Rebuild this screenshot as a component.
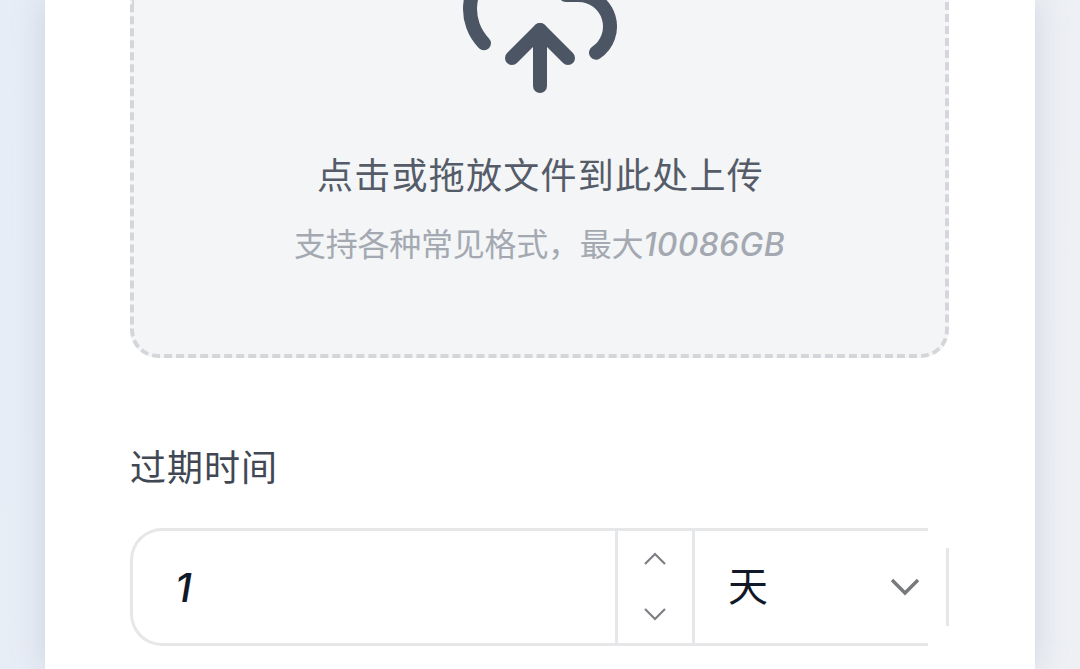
<div class="page">
  <main class="card">
    <section class="drop">
      <svg class="cloud" viewBox="0 0 24 24" fill="none" stroke="currentColor" stroke-width="2" stroke-linecap="round" stroke-linejoin="round" aria-hidden="true">
        <path d="M12 13v8" />
        <path d="M4 14.899A7 7 0 1 1 15.71 8h1.79a4.5 4.5 0 0 1 2.5 8.242" />
        <path d="m8 17 4-4 4 4" />
      </svg>
      <p class="primary">点击或拖放文件到此处上传</p>
      <p class="secondary">支持各种常见格式，最大<i>10086GB</i></p>
    </section>

    <label class="label" for="expiry">过期时间</label>
    <div class="group">
      <input id="expiry" class="number" value="1" />
      <div class="stepper">
        <button aria-label="增加">
          <svg viewBox="0 0 24 14" fill="none" stroke="currentColor" stroke-width="2.2"><path d="M2 12 12 2l10 10" /></svg>
        </button>
        <button aria-label="减少">
          <svg viewBox="0 0 24 14" fill="none" stroke="currentColor" stroke-width="2.2"><path d="M2 2l10 10L22 2" /></svg>
        </button>
      </div>
      <div class="select">
        <span>天</span>
        <svg viewBox="0 0 30 18" fill="none" stroke="currentColor" stroke-width="3.4"><path d="M2 2l13 13L28 2" /></svg>
      </div>
    </div>
  </main>
</div>

<style>
  :global(body) {
    margin: 0;
    overflow: hidden;
    background: #fff;
  }
  .page {
    height: 669px;
    overflow: hidden;
    display: flex;
    justify-content: center;
    background: linear-gradient(100deg, #e6edf6 0%, #eceff5 50%, #eef0f4 100%);
    font-family: "Noto Sans CJK SC", "Noto Sans", sans-serif;
  }
  .card {
    box-sizing: border-box;
    width: 990px;
    height: 100%;
    padding: 0 86px 0 85px;
    background: #fff;
    box-shadow: 0 0 30px rgba(140, 150, 172, 0.3);
    flex: none;
  }
  .drop {
    box-sizing: border-box;
    height: 358px;
    border: 4px dashed #d4d6da;
    border-top: 0;
    border-radius: 0 0 28px 28px;
    background: #f3f5f7;
    display: flex;
    flex-direction: column;
    align-items: center;
  }
  .cloud {
    width: 168px;
    height: 168px;
    flex: none;
    margin-top: -61px;
    color: #4b5563;
  }
  .primary {
    margin: 40px 0 0;
    padding-left: 2px;
    font-size: 36px;
    line-height: 52px;
    letter-spacing: 1.25px;
    color: #555c68;
  }
  .secondary {
    margin: 19px 0 0;
    font-size: 32px;
    line-height: 48px;
    letter-spacing: -0.25px;
    color: #a4a9b1;
  }
  .secondary i {
    font-family: "Inter", sans-serif;
    font-style: italic;
    font-weight: 500;
    letter-spacing: 0.3px;
  }
  .label {
    display: block;
    margin-top: 81px;
    font-size: 36px;
    line-height: 52px;
    letter-spacing: 1px;
    color: #414854;
  }
  .group {
    box-sizing: border-box;
    position: relative;
    margin-top: 37px;
    height: 118px;
    width: 798px;
    display: flex;
    border: 3px solid #e6e7e9;
    border-right: 0;
    border-radius: 32px 0 0 32px;
    background: #fff;
  }
  .group::after {
    content: "";
    position: absolute;
    left: 813px;
    top: 17px;
    width: 3px;
    height: 78px;
    background: #e6e7e9;
  }
  .number {
    width: 482px;
    flex: none;
    box-sizing: border-box;
    border: 0;
    padding: 0 0 0 42px;
    background: transparent;
    outline: 0;
    font-family: "Inter", sans-serif;
    font-style: italic;
    font-weight: 500;
    font-size: 40px;
    color: #111827;
  }
  .stepper {
    width: 80px;
    flex: none;
    box-sizing: border-box;
    padding-bottom: 2px;
    border-left: 3px solid #e6e7e9;
    border-right: 3px solid #e6e7e9;
    display: flex;
    flex-direction: column;
  }
  .stepper button {
    flex: 1;
    border: 0;
    padding: 0;
    background: none;
    color: #7d7f84;
    display: flex;
    align-items: center;
    justify-content: center;
  }
  .stepper svg {
    width: 24px;
    height: 14px;
  }
  .select {
    flex: 1;
    min-width: 0;
    display: flex;
    align-items: center;
    padding-left: 33px;
    font-size: 40px;
    color: #111827;
  }
  .select span {
    line-height: 52px;
    padding-bottom: 6px;
  }
  .select svg {
    flex: none;
    width: 30px;
    height: 18px;
    margin-left: 122px;
    margin-right: -18px;
    color: #77797d;
  }
</style>
